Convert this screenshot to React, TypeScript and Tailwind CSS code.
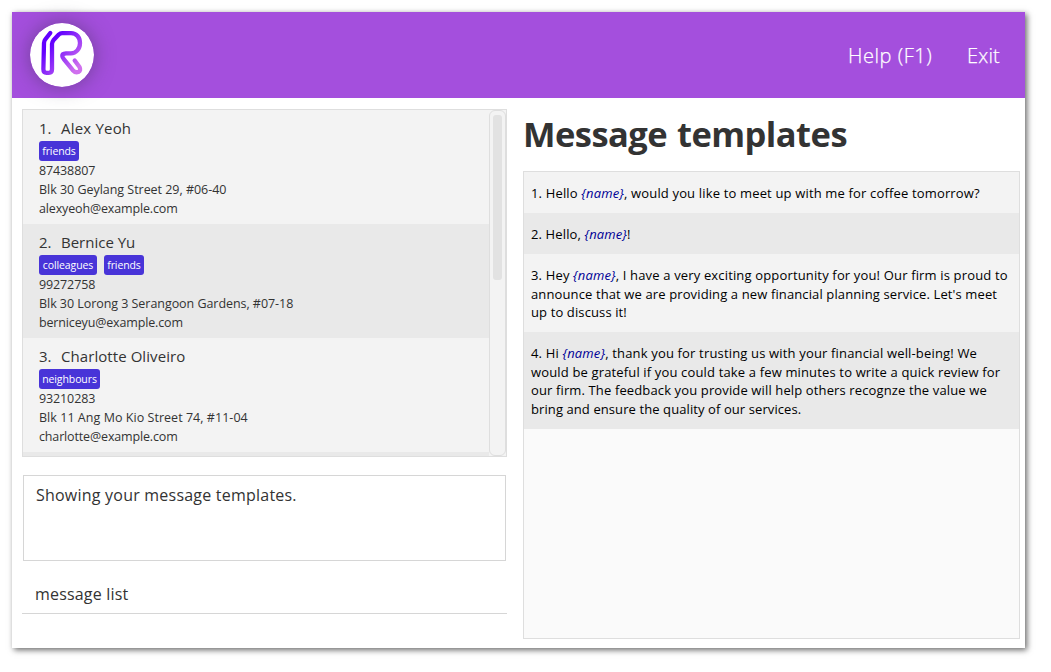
import type { ReactNode } from 'react';

type Contact = {
  name: string;
  nameClass: string;
  tags: { label: string; className: string }[];
  phone: string;
  address: string;
  addressClass: string;
  email: string;
  emailClass: string;
};

const contacts: Contact[] = [
  {
    name: 'Alex Yeoh',
    nameClass: 'tracking-[0.2px]',
    tags: [{ label: 'friends', className: 'w-10' }],
    phone: '87438807',
    address: 'Blk 30 Geylang Street 29, #06-40',
    addressClass: 'tracking-[-0.03px]',
    email: 'alexyeoh@example.com',
    emailClass: 'tracking-[-0.15px]',
  },
  {
    name: 'Bernice Yu',
    nameClass: 'tracking-[0px]',
    tags: [
      { label: 'colleagues', className: 'w-[58px]' },
      { label: 'friends', className: 'w-10' },
    ],
    phone: '99272758',
    address: 'Blk 30 Lorong 3 Serangoon Gardens, #07-18',
    addressClass: 'tracking-[-0.05px]',
    email: 'berniceyu@example.com',
    emailClass: 'tracking-[-0.15px]',
  },
  {
    name: 'Charlotte Oliveiro',
    nameClass: 'tracking-[0.07px]',
    tags: [{ label: 'neighbours', className: 'w-[61px]' }],
    phone: '93210283',
    address: 'Blk 11 Ang Mo Kio Street 74, #11-04',
    addressClass: 'tracking-[0.04px]',
    email: 'charlotte@example.com',
    emailClass: 'tracking-[-0.15px]',
  },
];

function Logo() {
  return (
    <svg className="h-16 w-16 shrink-0 rounded-full shadow-[0_0_20px_rgba(60,50,80,0.5)]" viewBox="30 23 64 64" fill="none">
      <defs>
        <linearGradient id="ink" x1="52" y1="42" x2="80" y2="65" gradientUnits="userSpaceOnUse">
          <stop offset="0" stopColor="#6200ff" />
          <stop offset="1" stopColor="#d070ee" />
        </linearGradient>
      </defs>
      <circle cx="62" cy="55" r="32" fill="#fff" />
      <path
        d="M50.3 33L45.2 39.5Q44 41 44 43L43.4 69.3Q43.4 72.8 46.5 72.8H49Q52 72.8 52 69.3V44Q52 42 53.4 40.3L58.8 34.5Q60.2 33.2 62.2 33.2H71C76.5 33.2 80 37.5 80 43C80 49 76 53.4 71 53.4H66Q62.2 53.6 62.3 56Q62.3 57.3 64 59.3L72.8 70.2Q75.3 73 78.3 72Q81.3 70.5 79.5 67L74.7 60.5"
        stroke="url(#ink)"
        strokeWidth="4.3"
        strokeLinecap="round"
        strokeLinejoin="round"
      />
    </svg>
  );
}

function Name() {
  return <span className="italic text-[#000096]">{'{name}'}</span>;
}

function Line({ className = '', children }: { className?: string; children: ReactNode }) {
  return (
    <div className="flex">
      <span className={`whitespace-pre ${className}`}>{children}</span>
    </div>
  );
}

function ContactRow({ contact, index }: { contact: Contact; index: number }) {
  return (
    <div className={`h-[114px] shrink-0 pt-[7px] pl-4 ${index % 2 ? 'bg-[#e9e9e9]' : 'bg-[#f3f3f3]'}`}>
      <div className="flex h-6 text-[15px] leading-[22px]">
        <span className="w-[22px]">{index + 1}.</span>
        <span className={`whitespace-pre ${contact.nameClass}`}>{contact.name}</span>
      </div>
      <div className="flex h-5 gap-[7px]">
        {contact.tags.map((tag) => (
          <span
            key={tag.label}
            className={`flex h-5 items-center justify-center rounded-[3px] bg-[#4834d8] text-[10.5px] leading-4 tracking-[-0.1px] text-white ${tag.className}`}
          >
            {tag.label}
          </span>
        ))}
      </div>
      <div className="text-[12.5px] leading-[19px]">
        <Line className="tracking-[-0.12px]">{contact.phone}</Line>
        <Line className={contact.addressClass}>{contact.address}</Line>
        <Line className={contact.emailClass}>{contact.email}</Line>
      </div>
    </div>
  );
}

export default function App() {
  return (
    <div className="h-[672px] w-[1051px] overflow-hidden bg-white pt-3 pl-3 font-['Open_Sans','Noto_Sans',sans-serif] text-[#333]">
      <div className="flex h-[636px] w-[1013px] flex-col bg-white shadow-[2px_2px_6px_0px_rgba(0,0,0,0.6)]">
        <header className="flex h-[86px] shrink-0 items-center bg-[#a44fdd] pl-[18px] text-[20px] font-light text-white [-webkit-text-stroke:0.25px_white]">
          <Logo />
          <span className="ml-auto w-[119px] pt-0.5 tracking-[0.55px] whitespace-pre">Help (F1)</span>
          <span className="w-[58px] pt-0.5 tracking-[0.2px]">Exit</span>
        </header>
        <main className="flex min-h-0 flex-1">
          <section className="mt-[11px] ml-[10px] flex w-[485px] flex-col">
            <div className="flex h-[348px] border border-[#dedede] bg-[#f3f3f3]">
              <div className="flex flex-1 flex-col overflow-hidden">
                {contacts.map((contact, index) => (
                  <ContactRow key={contact.name} contact={contact} index={index} />
                ))}
                <div className="h-1 shrink-0 bg-[#e9e9e9]" />
              </div>
              <div className="w-[17px] rounded-[6px] border border-[#dedede] px-[3px] pt-1">
                <div className="h-[165px] rounded-[3px] bg-[#e2e2e2]" />
              </div>
            </div>
            <div className="mx-px mt-[18px] h-[86px] border border-[#d6d6d6] pt-[7px] pl-3 text-[16px] leading-6">
              <Line className="tracking-[0.22px]">Showing your message templates.</Line>
            </div>
            <div className="mt-[21px] h-8 border-b border-[#d6d6d6] pl-[13px] text-[16px] leading-6">
              <Line className="tracking-[0.18px]">message list</Line>
            </div>
          </section>
          <section className="ml-4 w-[497px]">
            <h1 className="h-[73px] pt-[11px] text-[34.5px] leading-[50px] font-bold tracking-[-0.55px] [word-spacing:1.5px] whitespace-pre">Message templates</h1>
            <div className="h-[468px] border border-[#dedede] bg-[#fafafa] text-[13px] leading-[18.7px] text-black">
              <div className="h-[41px] bg-[#f3f3f3] pt-3 pl-[7px]">
                <Line className="tracking-[0.16px]">1. Hello <Name />, would you like to meet up with me for coffee tomorrow?</Line>
              </div>
              <div className="h-[41px] bg-[#e9e9e9] pt-3 pl-[7px]">
                <Line className="tracking-[0.13px]">2. Hello, <Name />!</Line>
              </div>
              <div className="h-[78px] bg-[#f3f3f3] pt-3 pl-[7px]">
                <Line className="tracking-[0.155px]">3. Hey <Name />, I have a very exciting opportunity for you! Our firm is proud to</Line>
                <Line className="tracking-[0.12px]">announce that we are providing a new financial planning service. Let's meet</Line>
                <Line className="tracking-[0.12px]">up to discuss it!</Line>
              </div>
              <div className="h-[97px] bg-[#e9e9e9] pt-3 pl-[7px]">
                <Line className="tracking-[0.165px]">4. Hi <Name />, thank you for trusting us with your financial well-being! We</Line>
                <Line className="tracking-[0.15px]">would be grateful if you could take a few minutes to write a quick review for</Line>
                <Line className="tracking-[0.13px]">our firm. The feedback you provide will help others recognze the value we</Line>
                <Line className="tracking-[0.09px]">bring and ensure the quality of our services.</Line>
              </div>
            </div>
          </section>
        </main>
      </div>
    </div>
  );
}
